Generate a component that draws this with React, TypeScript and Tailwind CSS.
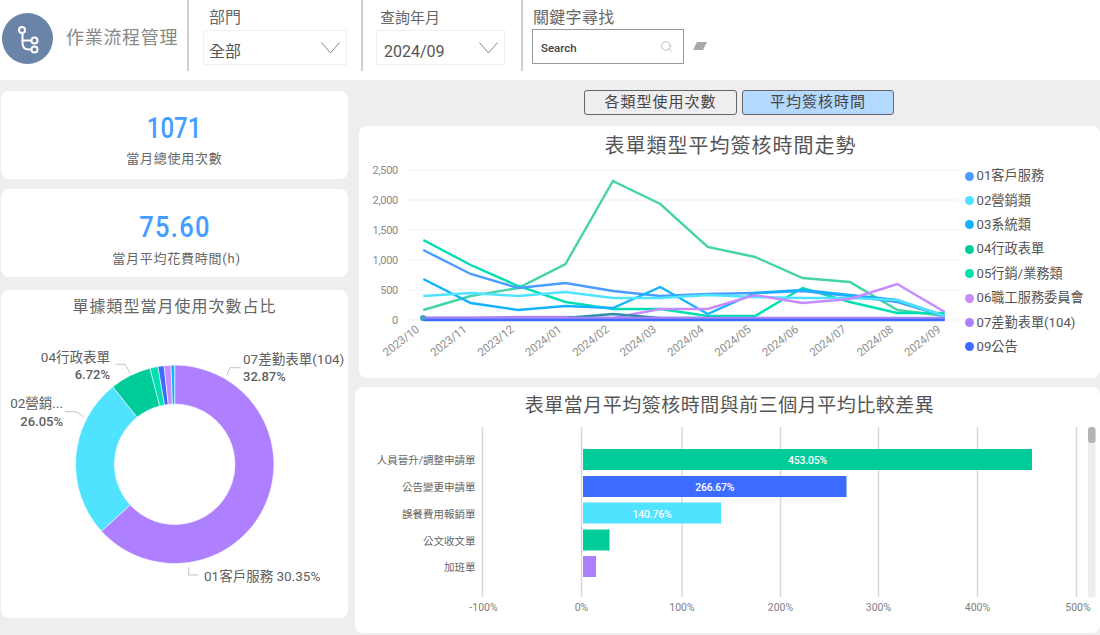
import { Search } from "lucide-react";

const months = ["2023/10", "2023/11", "2023/12", "2024/01", "2024/02", "2024/03", "2024/04", "2024/05", "2024/06", "2024/07", "2024/08", "2024/09"];

const series = [
    { color: "#45d4a6", w: 2.4, ys: [310, 296, 288, 264, 181, 204, 247, 257, 278, 282, 310, 316] },
    { color: "#00dfb0", w: 2.4, ys: [240, 265, 286, 302, 309, 309, 316, 316, 288, 302, 313, 313] },
    { color: "#4a9dff", w: 2.4, ys: [250, 274, 288, 283, 291, 296, 294, 293, 291, 296, 302, 316] },
    { color: "#14b2ff", w: 2.4, ys: [279, 303, 310, 306, 308, 287, 314, 293, 290, 295, 300, 316] },
    { color: "#50e3ff", w: 2.4, ys: [296, 293, 296, 292, 298, 298, 295, 297, 298, 298, 300, 316] },
    { color: "#c68bff", w: 2.4, ys: [318, 318, 317, 317, 318, 309, 309, 295, 303, 299, 284, 312] },
    { color: "#2b8fa8", w: 2.4, ys: [318, 318, 318, 318, 314, 318, 318, 319, 319, 319, 319, 319] },
    { color: "#ae7fff", w: 2.6, ys: [318, 318, 318, 318, 318, 318, 318, 318, 318, 318, 318, 318] },
    { color: "#3b6bff", w: 2.6, ys: [320, 320, 320, 320, 320, 320, 320, 320, 320, 320, 320, 320] },
];

const legend = [
    { color: "#4a9dff", label: "01客戶服務" },
    { color: "#50e3ff", label: "02營銷類" },
    { color: "#14b2ff", label: "03系統類" },
    { color: "#00cc99", label: "04行政表單" },
    { color: "#00dfb0", label: "05行銷/業務類" },
    { color: "#c68bff", label: "06職工服務委員會" },
    { color: "#ae7fff", label: "07差勤表單(104)" },
    { color: "#3b6bff", label: "09公告" },
];

const slices = [
    { color: "#ae7fff", from: 0, to: 63.22 },
    { color: "#50e3ff", from: 63.22, to: 89.27 },
    { color: "#00cc99", from: 89.27, to: 95.99 },
    { color: "#00dfb0", from: 95.99, to: 97.3 },
    { color: "#3b6bff", from: 97.3, to: 98.3 },
    { color: "#c68bff", from: 98.3, to: 99.4 },
    { color: "#14b2ff", from: 99.4, to: 100 },
];

const bars = [
    { label: "人員晉升/調整申請單", y: 450, end: 1032, color: "#00cc99", value: "453.05%" },
    { label: "公告變更申請單", y: 477, end: 846.5, color: "#3b6bff", value: "266.67%" },
    { label: "誤餐費用報銷單", y: 503.5, end: 721, color: "#50e3ff", value: "140.76%" },
    { label: "公文收文單", y: 530.5, end: 609.5, color: "#00cc99", value: "" },
    { label: "加班單", y: 557, end: 596, color: "#ae7fff", value: "" },
];

const ticks = [
    { x: 482.5, tx: 483.5, label: "-100%" },
    { x: 581.5, tx: 581.5, label: "0%" },
    { x: 682, tx: 682, label: "100%" },
    { x: 780.5, tx: 780.5, label: "200%" },
    { x: 878.5, tx: 878.5, label: "300%" },
    { x: 977.5, tx: 977.5, label: "400%" },
    { x: 1076.5, tx: 1078, label: "500%" },
];

function slicePath(from: number, to: number) {
    const cx = 174.7, cy = 464.3, R = 99.2, r = 60.2;
    const a = (from / 100) * Math.PI * 2;
    const b = (to / 100) * Math.PI * 2;
    const large = to - from > 50 ? 1 : 0;
    const p = (rad: number, t: number) => `${(cx + rad * Math.sin(t)).toFixed(2)} ${(cy - rad * Math.cos(t)).toFixed(2)}`;
    return `M${p(R, a)} A${R} ${R} 0 ${large} 1 ${p(R, b)} L${p(r, b)} A${r} ${r} 0 ${large} 0 ${p(r, a)} Z`;
}

function Chevron() {
    return (
        <svg width="19" height="12" viewBox="0 0 19 12" fill="none" stroke="#8a8a8a" strokeWidth="1">
            <path d="M0.5 0.5 L9.5 11 L18.5 0.5" />
        </svg>
    );
}

function Dropdown({ value, width, inset }: { value: string; width: string; inset: string }) {
    return (
        <div className={`flex h-[35px] items-center justify-between border border-[#f0f0f0] pr-[6px] text-[16px] text-[#555] ${inset} ${width}`}>
            <span className="pt-[9px]">{value}</span>
            <Chevron />
        </div>
    );
}

function Kpi({ value, label, valueClass, shift }: { value: string; label: string; valueClass: string; shift: string }) {
    return (
        <div className="flex h-[88px] flex-col items-center rounded-[8px] bg-white">
            <div className={`text-[30px] leading-[35px] font-medium text-[#449dff] ${valueClass}`}>{value}</div>
            <div className={`mt-[5px] text-[13px] leading-[18px] tracking-[0.75px] text-[#666] ${shift}`}>{label}</div>
        </div>
    );
}

export default function App() {
    return (
        <div className="h-[635px] w-[1100px] overflow-hidden bg-[#eeeef0] font-['Roboto','Noto_Sans_CJK_TC',sans-serif]">
            <header className="flex h-[80px] items-start bg-white">
                <div className="flex h-[71px] w-[187px] items-start pl-[2px]">
                    <div className="mt-[13px] flex h-[51px] w-[51px] items-center justify-center rounded-full bg-[#6a84a8]">
                        <svg width="51" height="51" viewBox="0 0 51 51" fill="none" stroke="#fff" strokeWidth="2">
                            <circle cx="20" cy="17" r="3" />
                            <circle cx="32.5" cy="27.5" r="3" />
                            <circle cx="32.5" cy="36.5" r="3" />
                            <path d="M20.5 20 V30 Q20.5 36.5 27 36.5 H29.5 M20.5 27.5 H29.5" />
                        </svg>
                    </div>
                    <div className="mt-[26px] ml-[13px] text-[18px] leading-[24px] tracking-[0.7px] whitespace-nowrap text-[#888]">作業流程管理</div>
                </div>
                <div className="h-[71px] w-[2px] bg-[#d0d0d0]" />
                <div className="w-[172px] pl-[14px]">
                    <div className="mt-[7px] ml-[6px] h-[23px] text-[16px] leading-[22px] text-[#666]">部門</div>
                    <Dropdown value="全部" width="w-[144px]" inset="pl-[5px]" />
                </div>
                <div className="h-[71px] w-[2px] bg-[#d0d0d0]" />
                <div className="w-[158px] pl-[13px]">
                    <div className="mt-[7px] ml-[4px] h-[23px] text-[15px] leading-[22px] text-[#666]">查詢年月</div>
                    <Dropdown value="2024/09" width="w-[129px]" inset="pl-[7px]" />
                </div>
                <div className="h-[71px] w-[2px] bg-[#d0d0d0]" />
                <div className="pl-[9px]">
                    <div className="mt-[7px] ml-[1px] h-[22px] text-[16px] leading-[22px] tracking-[0.3px] text-[#666]">關鍵字尋找</div>
                    <div className="flex items-center">
                        <div className="flex h-[35px] w-[152px] items-center justify-between border border-[#999] pr-[10px] pl-[8px] text-[11.5px] font-medium text-[#444]">
                            <span className="pt-[5px]">Search</span>
                            <Search size={13} strokeWidth={1.2} color="#999" />
                        </div>
                        <svg className="mb-[1px] ml-[9px]" width="14" height="9" viewBox="0 0 14 9" fill="#a8a8a8">
                            <path d="M4 0 H14 L10 8 H0 Z" />
                        </svg>
                    </div>
                </div>
            </header>

            <main className="flex">
                <div className="ml-[1px] flex w-[347px] flex-col pt-[11px]">
                    <Kpi value="1071" label="當月總使用次數" valueClass="mt-[19px] scale-x-[0.8]" shift="pl-0" />
                    <div className="h-[10px]" />
                    <Kpi value="75.60" label="當月平均花費時間(h)" valueClass="mt-[20px] ml-[2px] scale-x-[0.85] tracking-[1.5px]" shift="mt-[6px] pl-[4px]" />
                    <div className="h-[13px]" />
                    <div className="h-[328px] rounded-[8px] bg-white">
                        <div className="pt-[6px] text-center text-[16px] leading-[22px] tracking-[1px] text-[#666]">單據類型當月使用次數占比</div>
                        <svg className="mt-[4px] block" width="347" height="296" viewBox="1 322 347 296">
                            {slices.map((s) => (
                                <path key={s.color} d={slicePath(s.from, s.to)} fill={s.color} stroke="#fff" strokeWidth="0.6" />
                            ))}
                            <g fill="none" stroke="#c4c4c4" strokeWidth="1">
                                <path d="M226.7 375.7 L230 367.7 H240.7" />
                                <path d="M130 372.7 L125 364.3 H115.7" />
                                <path d="M84 416.7 L76 411.7 H65" />
                                <path d="M188.7 567.3 V575 H198.3" />
                            </g>
                            <g className="fill-[#606060] text-[13.5px]">
                                <text x="243" y="364">07差勤表單(104)</text>
                                <text x="243" y="381" className="text-[13px] font-medium">32.87%</text>
                                <text x="110" y="362" textAnchor="end">04行政表單</text>
                                <text x="110" y="379" textAnchor="end" className="text-[13px] font-medium">6.72%</text>
                                <text x="63" y="408" textAnchor="end">02營銷...</text>
                                <text x="63" y="426" textAnchor="end" className="text-[13px] font-medium">26.05%</text>
                                <text x="204" y="581">01客戶服務 30.35%</text>
                            </g>
                        </svg>
                    </div>
                </div>

                <div className="ml-[7px] flex w-[745px] flex-col pt-[10px]">
                    <div className="flex h-[25px] gap-[5px] pl-[229px] text-[15px] tracking-[1px] text-[#444]">
                        <div className="flex h-[25px] w-[153px] items-center justify-center rounded-[3px] border border-[#666]">各類型使用次數</div>
                        <div className="flex h-[25px] w-[152px] items-center justify-center rounded-[3px] border border-[#666] bg-[#b3d9ff]">平均簽核時間</div>
                    </div>
                    <div className="mt-[11px] ml-[4px] h-[252px] rounded-[8px] bg-white">
                        <div className="pt-[7px] pl-[2px] text-center text-[20px] leading-[27px] tracking-[1px] text-[#555]">表單類型平均簽核時間走勢</div>
                        <div className="flex">
                            <svg className="block" width="602" height="218" viewBox="359 160 602 218">
                                {[170, 200, 230, 260, 290, 320].map((y, i) => (
                                    <g key={y}>
                                        <line x1="407" x2="959" y1={y} y2={y} stroke="#f1f1f1" strokeWidth="1" />
                                        <text x="398" y={y + 4} textAnchor="end" className="fill-[#8a8a8a] text-[11px] tracking-[-0.3px]">
                                            {["2,500", "2,000", "1,500", "1,000", "500", "0"][i]}
                                        </text>
                                    </g>
                                ))}
                                {months.map((m, i) => (
                                    <text key={m} textAnchor="end" transform={`translate(${420 + i * 47.4} 331) rotate(-38)`} className="fill-[#8f8f8f] text-[11.5px] tracking-[-0.2px]">{m}</text>
                                ))}
                                {series.map((s) => (
                                    <polyline
                                        key={s.color}
                                        points={s.ys.map((y, i) => `${423.3 + i * 47.4},${y}`).join(" ")}
                                        fill="none"
                                        stroke={s.color}
                                        strokeWidth={s.w}
                                    />
                                ))}
                                <circle cx="423" cy="318" r="3" fill="#3fa0c8" />
                            </svg>
                            <div className="flex flex-col pt-[4px] pl-[4px]">
                                {legend.map((l) => (
                                    <div key={l.label} className="flex h-[24.4px] items-center gap-[2.5px] text-[13.2px] whitespace-nowrap text-[#555]">
                                        <span className="h-[9px] w-[9px] rounded-full" style={{ backgroundColor: l.color }} />
                                        {l.label}
                                    </div>
                                ))}
                            </div>
                        </div>
                    </div>
                    <div className="mt-[9px] h-[246px] rounded-[8px] bg-white">
                        <div className="pt-[5px] pl-[4px] text-center text-[19px] leading-[27px] tracking-[0.5px] text-[#555]">表單當月平均簽核時間與前三個月平均比較差異</div>
                        <svg className="block" width="745" height="213" viewBox="355 420 745 213">
                            {ticks.map((t) => (
                                <g key={t.label}>
                                    <line x1={t.x} x2={t.x} y1="428" y2="598" stroke="#d8d8d8" strokeWidth="1.5" />
                                    <text x={t.tx} y="611.5" textAnchor="middle" className="fill-[#808080] text-[10.5px]">{t.label}</text>
                                </g>
                            ))}
                            {bars.map((b) => (
                                <g key={b.label}>
                                    <text x="475.5" y={b.y + 15} textAnchor="end" className="fill-[#666] text-[10.5px]">{b.label}</text>
                                    <rect x="583" y={b.y} width={b.end - 583} height="21" fill={b.color} />
                                    {b.value && (
                                        <text x={(583 + b.end) / 2} y={b.y + 15} textAnchor="middle" className="fill-white text-[10.5px] font-medium tracking-[-0.2px]">{b.value}</text>
                                    )}
                                </g>
                            ))}
                            <rect x="1088" y="428" width="7.5" height="171" rx="3" fill="#eeeef0" />
                            <rect x="1088" y="428" width="7.5" height="16" rx="3" fill="#b4b4b4" />
                        </svg>
                    </div>
                </div>
            </main>
        </div>
    );
}
